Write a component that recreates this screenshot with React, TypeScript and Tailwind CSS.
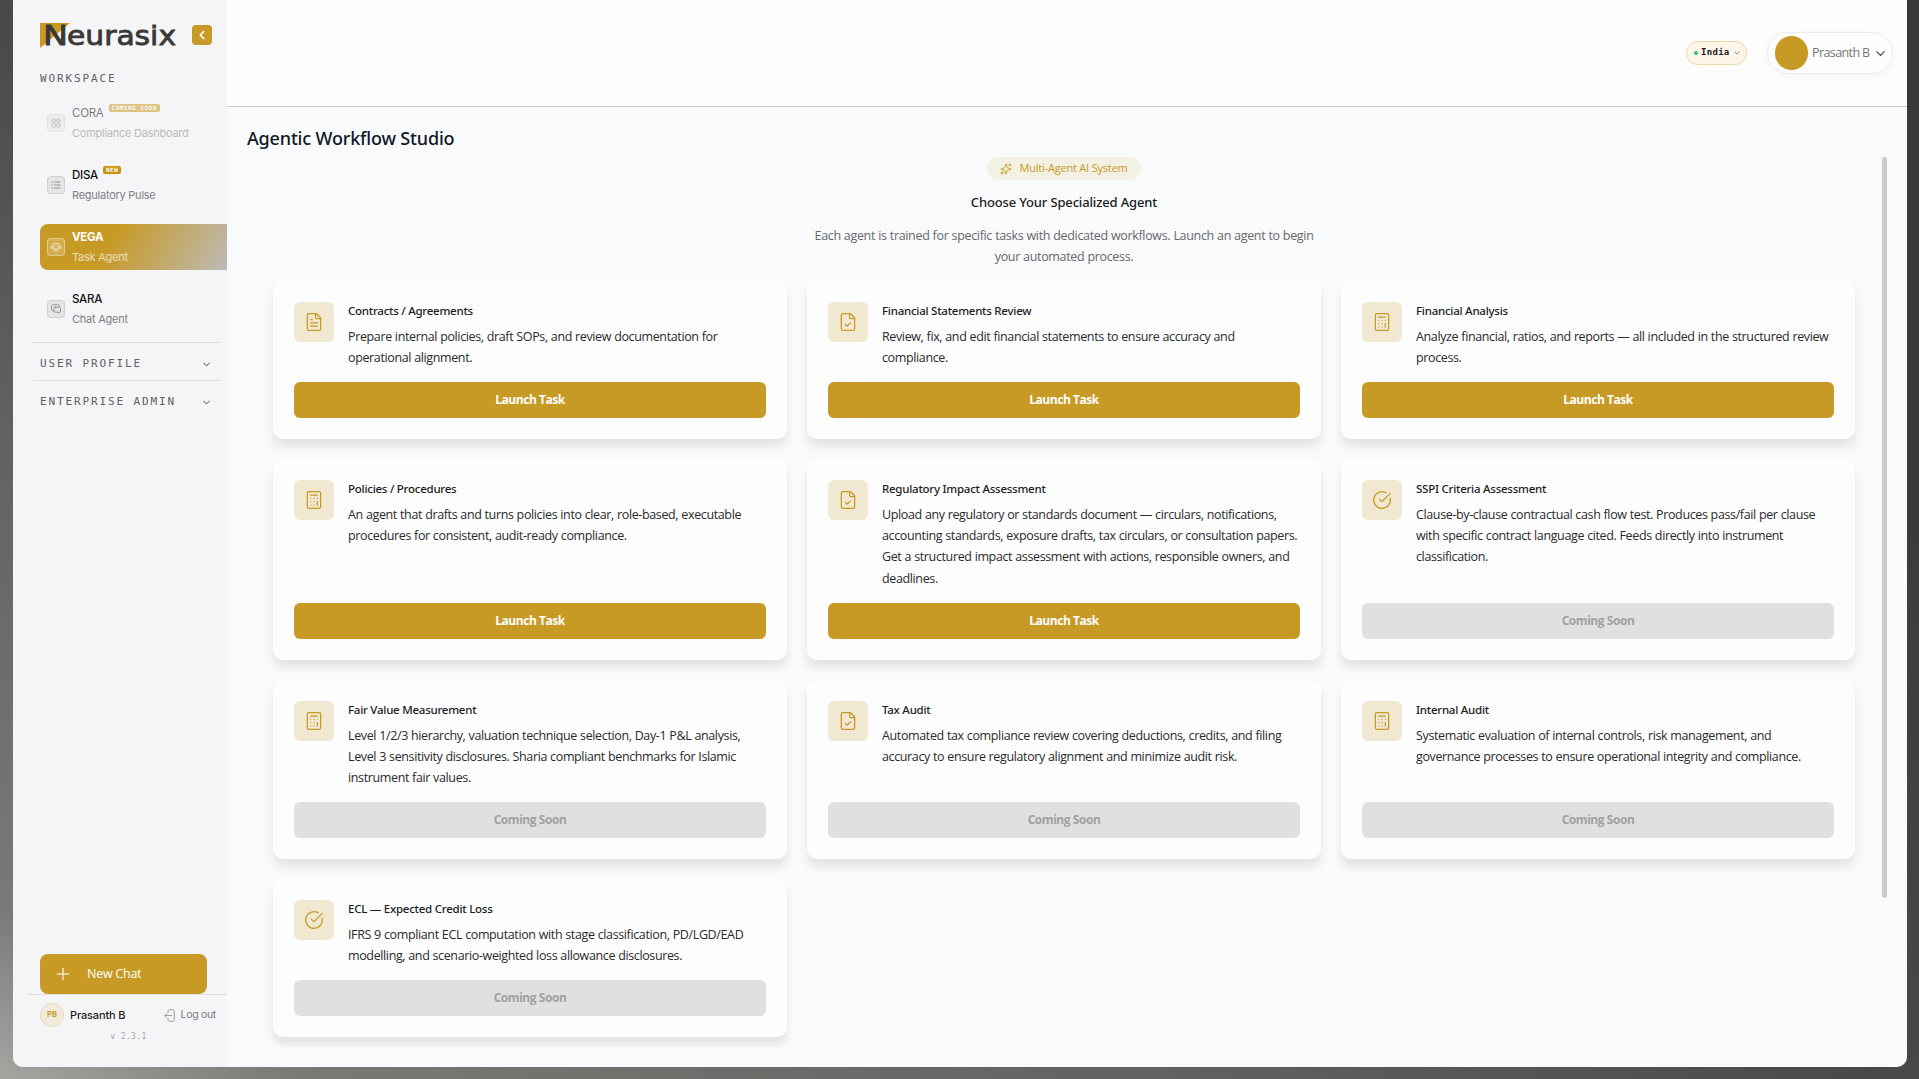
import type { ReactNode } from 'react'
import {
  Calculator,
  ChevronDown,
  ChevronLeft,
  CircleCheckBig,
  FileCheck,
  FileText,
  Plus,
  Sparkles,
  type LucideIcon,
} from 'lucide-react'

type Agent = {
  title: string
  description: string
  icon: LucideIcon
  ready: boolean
}

const AGENTS: Agent[] = [
  {
    title: 'Contracts / Agreements',
    description: 'Prepare internal policies, draft SOPs, and review documentation for operational alignment.',
    icon: FileText,
    ready: true,
  },
  {
    title: 'Financial Statements Review',
    description: 'Review, fix, and edit financial statements to ensure accuracy and compliance.',
    icon: FileCheck,
    ready: true,
  },
  {
    title: 'Financial Analysis',
    description: 'Analyze financial, ratios, and reports — all included in the structured review process.',
    icon: Calculator,
    ready: true,
  },
  {
    title: 'Policies / Procedures',
    description:
      'An agent that drafts and turns policies into clear, role-based, executable procedures for consistent, audit-ready compliance.',
    icon: Calculator,
    ready: true,
  },
  {
    title: 'Regulatory Impact Assessment',
    description:
      'Upload any regulatory or standards document — circulars, notifications, accounting standards, exposure drafts, tax circulars, or consultation papers. Get a structured impact assessment with actions, responsible owners, and deadlines.',
    icon: FileCheck,
    ready: true,
  },
  {
    title: 'SSPI Criteria Assessment',
    description:
      'Clause-by-clause contractual cash flow test. Produces pass/fail per clause with specific contract language cited. Feeds directly into instrument classification.',
    icon: CircleCheckBig,
    ready: false,
  },
  {
    title: 'Fair Value Measurement',
    description:
      'Level 1/2/3 hierarchy, valuation technique selection, Day-1 P&L analysis, Level 3 sensitivity disclosures. Sharia compliant benchmarks for Islamic instrument fair values.',
    icon: Calculator,
    ready: false,
  },
  {
    title: 'Tax Audit',
    description:
      'Automated tax compliance review covering deductions, credits, and filing accuracy to ensure regulatory alignment and minimize audit risk.',
    icon: FileCheck,
    ready: false,
  },
  {
    title: 'Internal Audit',
    description:
      'Systematic evaluation of internal controls, risk management, and governance processes to ensure operational integrity and compliance.',
    icon: Calculator,
    ready: false,
  },
  {
    title: 'ECL — Expected Credit Loss',
    description:
      'IFRS 9 compliant ECL computation with stage classification, PD/LGD/EAD modelling, and scenario-weighted loss allowance disclosures.',
    icon: CircleCheckBig,
    ready: false,
  },
]

function NavGlyph({ children }: { children: ReactNode }) {
  return (
    <svg width="10" height="10" viewBox="0 0 20 20" fill="none" stroke="currentColor" strokeWidth="1.8" strokeLinecap="round" strokeLinejoin="round">
      {children}
    </svg>
  )
}

const GridGlyph = (
  <NavGlyph>
    <circle cx="5.5" cy="5.5" r="3.7" />
    <circle cx="14.5" cy="5.5" r="3.7" />
    <circle cx="5.5" cy="14.5" r="3.7" />
    <circle cx="14.5" cy="14.5" r="3.7" />
  </NavGlyph>
)

const ListGlyph = (
  <NavGlyph>
    <path d="M2 4h1M7 4h11M2 10h1M7 10h11M2 16h1M7 16h11" />
  </NavGlyph>
)

const BotGlyph = (
  <NavGlyph>
    <path d="M4 5c0-2 1.500-3 3-1.500h6c1.500-1.500 3-.5 3 1.500v8c0 3-3 4.500-6 4.500S4 16 4 13z" />
    <path d="M1 8v4M19 8v4M7.500 9v.5M12.500 9v.5M7.500 13.500c1.500 1 3.500 1 5 0" />
  </NavGlyph>
)

const ChatGlyph = (
  <NavGlyph>
    <path d="M5 14c-2.500 0-4-1-4-3.500V5.500C1 3 2.500 1.500 5 1.500h8c2.500 0 4 1.500 4 4" />
    <path d="M8.500 6.500h8c1.500 0 2.500 1 2.500 2.500v5c0 1.500-1 2.500-2.500 2.500v2l-3-2h-5C7 16.500 6 15.500 6 14V9c0-1.500 1-2.500 2.500-2.500z" />
  </NavGlyph>
)

type NavItemProps = {
  name: string
  label: string
  glyph: ReactNode
  badge?: string
  active?: boolean
  disabled?: boolean
}

function NavItem({ name, label, glyph, badge, active, disabled }: NavItemProps) {
  return (
    <a
      className={`flex h-[46px] items-center gap-[7px] rounded-l-lg pl-[7px] ${
        active ? 'bg-[linear-gradient(120deg,#c79a25_0%,#c79a25_38%,#bdbab6_100%)] text-white' : ''
      } ${disabled ? 'opacity-50' : ''}`}
    >
      <span
        className={`flex size-[18px] shrink-0 items-center justify-center rounded border ${
          active ? 'border-white/35 bg-white/20 text-white/80' : 'border-[#d0d0d3] bg-[#e5e5e8] text-[#8b8b8e]'
        }`}
      >
        {glyph}
      </span>
      <span className="flex flex-col">
        <span className="flex h-5 items-start gap-[5px]">
          <span
            className={`text-[11.5px] leading-5 tracking-[-0.25px] ${
              active ? 'font-bold' : disabled ? 'text-black' : 'font-medium text-[#111]'
            }`}
          >
            {name}
          </span>
          {badge && (
            <span className="mt-px h-2 rounded-[2px] bg-[#c8920f] px-[3px] font-['DejaVu_Sans_Mono',monospace] text-[6px] leading-[7px] font-bold tracking-[0.5px] text-white">
              {badge}
            </span>
          )}
        </span>
        <span className={`text-[11px] leading-5 tracking-[-0.25px] ${active ? 'text-white/65' : 'text-[#808084]'}`}>{label}</span>
      </span>
    </a>
  )
}

function SectionToggle({ label }: { label: string }) {
  return (
    <div className="mr-[7px] ml-5 flex h-[38px] items-center justify-between border-t border-[#dfdfe2] pt-1.5 pr-[8px] pl-[7px]">
      <span className="font-['DejaVu_Sans_Mono',monospace] text-[11px] tracking-[1.88px] text-[#606064]">{label}</span>
      <ChevronDown size={11} strokeWidth={2.8} className="text-[#8b8b8e]" />
    </div>
  )
}

function Logo() {
  return (
    <svg
      width="138"
      height="28"
      viewBox="0 0 138 28"
      className="overflow-visible"
      fontFamily="'DejaVu Sans', sans-serif"
      fontSize="26"
      fill="#3a3937"
      stroke="#3a3937"
      strokeWidth="0.8"
    >
      <path d="M0 0h30L0 25z" fill="#c79a25" stroke="none" />
      <text x="3" y="22" textLength="25" lengthAdjust="spacingAndGlyphs">
        N
      </text>
      <text x="27" y="22" textLength="109" lengthAdjust="spacingAndGlyphs">
        eurasix
      </text>
    </svg>
  )
}

function Sidebar() {
  return (
    <aside className="flex w-[214px] shrink-0 flex-col bg-[#f5f5f8] font-['Inter',sans-serif]">
      <div className="flex items-start justify-between pt-[23px] pr-[15px] pl-[27px]">
        <Logo />
        <button className="mt-0.5 flex size-5 items-center justify-center rounded bg-[#c79a25] text-white">
          <ChevronLeft size={14} strokeWidth={3} />
        </button>
      </div>

      <p className="mt-[18px] pl-[27px] font-['DejaVu_Sans_Mono',monospace] text-[11px] leading-5 tracking-[1.88px] text-[#606064]">
        WORKSPACE
      </p>

      <nav className="mt-[11px] flex flex-col gap-4 pl-[27px]">
        <NavItem name="CORA" label="Compliance Dashboard" glyph={GridGlyph} badge="COMING SOON" disabled />
        <NavItem name="DISA" label="Regulatory Pulse" glyph={ListGlyph} badge="NEW" />
        <NavItem name="VEGA" label="Task Agent" glyph={BotGlyph} active />
        <NavItem name="SARA" label="Chat Agent" glyph={ChatGlyph} />
      </nav>

      <div className="mt-[10px]">
        <SectionToggle label="USER PROFILE" />
        <SectionToggle label="ENTERPRISE ADMIN" />
      </div>

      <div className="mt-auto h-[113px]">
        <button className="ml-[27px] flex h-10 w-[167px] items-center gap-[14px] rounded-lg bg-[#c79a25] pl-[13px] font-['Open_Sans',sans-serif] text-[12.5px] tracking-[-0.25px] text-white">
          <Plus size={20} strokeWidth={1.3} />
          New Chat
        </button>
        <div className="ml-[14px] flex items-center border-t border-[#dfdfe2] pt-2 pr-[11px] pl-[13px]">
          <span className="flex size-6 items-center justify-center rounded-full border border-[#e8d9b0] bg-[#f0ebdd] text-[7.5px] font-bold text-[#c79a25]">
            PB
          </span>
          <span className="ml-1.5 text-[11px] font-medium tracking-[-0.15px] text-[#1c1c1e]">Prasanth B</span>
          <span className="ml-auto flex items-center gap-1.5 text-[10.5px] tracking-[-0.3px] text-[#7b7b7f]">
            <svg width="11" height="13" viewBox="0 0 11 13" fill="none" stroke="#9a9a9d" strokeWidth="1">
              <path d="M4 4V2.500C4 1.300 4.600.7 5.800.7h2.700c1.200 0 1.800.6 1.800 1.800v8c0 1.200-.6 1.800-1.800 1.800H5.800C4.600 12.300 4 11.700 4 10.500V9" />
              <path d="M8 6.500H.8M2.800 4.500l-2 2 2 2" />
            </svg>
            Log out
          </span>
        </div>
        <p className="pt-px pl-[17px] text-center font-['DejaVu_Sans_Mono',monospace] text-[8px] leading-[18px] tracking-[0.4px] text-[#a5a5a8]">v 2.3.1</p>
      </div>
    </aside>
  )
}

function Header() {
  return (
    <header className="flex h-[107px] shrink-0 items-center justify-end gap-5 border-b border-[#c8c9cb] bg-[#fdfdfd] pr-[14px]">
      <button className="flex h-6 w-[61px] items-center rounded-full border border-[#ecd9a8] bg-[#fdf5e8] pl-[7px]">
        <span className="size-1 rounded-full bg-[#2bc466]" />
        <span className="ml-[3px] font-['DejaVu_Sans_Mono',monospace] text-[9px] font-bold tracking-[0.3px] text-[#1c1c1e]">India</span>
        <ChevronDown size={8} strokeWidth={2.5} className="ml-[3px] text-[#777]" />
      </button>
      <button className="flex h-[42px] w-[126px] items-center rounded-full border border-[#ededee] bg-[#fdfdfd] pl-[7px] shadow-[0_2px_8px_rgba(0,0,0,0.04)]">
        <span className="h-[34px] w-[33px] shrink-0 rounded-full bg-[#c79a25]" />
        <span className="ml-1 text-[12.5px] tracking-[-0.6px] whitespace-nowrap text-[#77777a]">Prasanth B</span>
        <ChevronDown size={15} strokeWidth={2} className="ml-[3px] shrink-0 text-[#48484a]" />
      </button>
    </header>
  )
}

function AgentCard({ agent }: { agent: Agent }) {
  const Icon = agent.icon
  return (
    <article className="flex flex-col rounded-[10px] bg-[#fdfdfd] p-[21px] shadow-[0_8px_10px_rgba(0,0,0,0.09)]">
      <div className="flex gap-[14px]">
        <span className="flex size-10 shrink-0 items-center justify-center rounded-md bg-[#f1e8d1] text-[#c79a25]">
          <Icon size={20} strokeWidth={1.5} />
        </span>
        <div className="min-w-0">
          <h3 className="font-['Noto_Sans',sans-serif] text-[11.5px] leading-[18px] font-medium tracking-[-0.25px] text-[#1c1c1e]">{agent.title}</h3>
          <p className="mt-1.5 text-[12.5px] leading-[21.3px] tracking-[-0.37px] text-[#2a2a2c] [word-spacing:0.2px]">{agent.description}</p>
        </div>
      </div>
      <div className="mt-auto pt-[13.65px]">
        <button
          disabled={!agent.ready}
          className={`h-9 w-full rounded-md text-[12px] font-bold tracking-[-0.45px] ${
            agent.ready ? 'bg-[#c79a25] text-white' : 'bg-[#e0e0e0] text-[#a0a0a2]'
          }`}
        >
          {agent.ready ? 'Launch Task' : 'Coming Soon'}
        </button>
      </div>
    </article>
  )
}

export default function App() {
  return (
    <div className="h-screen w-screen overflow-hidden bg-[linear-gradient(to_top_right,#a5a5a1_0%,#7a7976_8%,#605f5d_32%,#494846_50%,#3a3937_80%)] pr-3 pb-3 pl-[13px] font-['Open_Sans',sans-serif]">
      <div className="flex h-full overflow-hidden rounded-b-[10px] bg-[#f9fafc]">
        <Sidebar />

        <main className="flex min-w-0 flex-1 flex-col">
          <Header />
          <h1 className="mt-4 pl-5 font-['Noto_Sans',sans-serif] text-lg leading-[30px] font-medium tracking-[-0.17px] text-[#111827]">
            Agentic Workflow Studio
          </h1>

          <div className="mt-1 mr-5 mb-5 ml-5 flex min-h-0 flex-1 overflow-hidden">
            <div className="flex-1 pr-[27px] pl-[26px]">
              {/* Intro */}
              <div className="flex flex-col items-center text-center">
                <span className="flex h-[23px] w-[154px] items-center justify-center gap-[7px] rounded-full bg-[#f3f0e4] text-[11px] tracking-[-0.2px] text-[#c79a25]">
                  <Sparkles size={12} strokeWidth={1.8} />
                  Multi-Agent AI System
                </span>
                <h2 className="mt-3 font-['Noto_Sans',sans-serif] text-[13px] leading-5 font-medium tracking-[-0.15px] text-[#1c1c1e]">
                  Choose Your Specialized Agent
                </h2>
                <p className="mt-[13px] w-[510px] text-[12.5px] leading-[21.3px] tracking-[-0.33px] text-[#68686b] [word-spacing:0.2px]">
                  Each agent is trained for specific tasks with dedicated workflows. Launch an agent to begin your automated process.
                </p>
              </div>

              {/* Agents */}
              <div className="mt-[13px] grid grid-cols-3 gap-5">
                {AGENTS.map((agent) => (
                  <AgentCard key={agent.title} agent={agent} />
                ))}
              </div>
            </div>
            <div className="h-[741px] w-[5px] rounded-full bg-[#cbcdcd]" />
          </div>
        </main>
      </div>
    </div>
  )
}
